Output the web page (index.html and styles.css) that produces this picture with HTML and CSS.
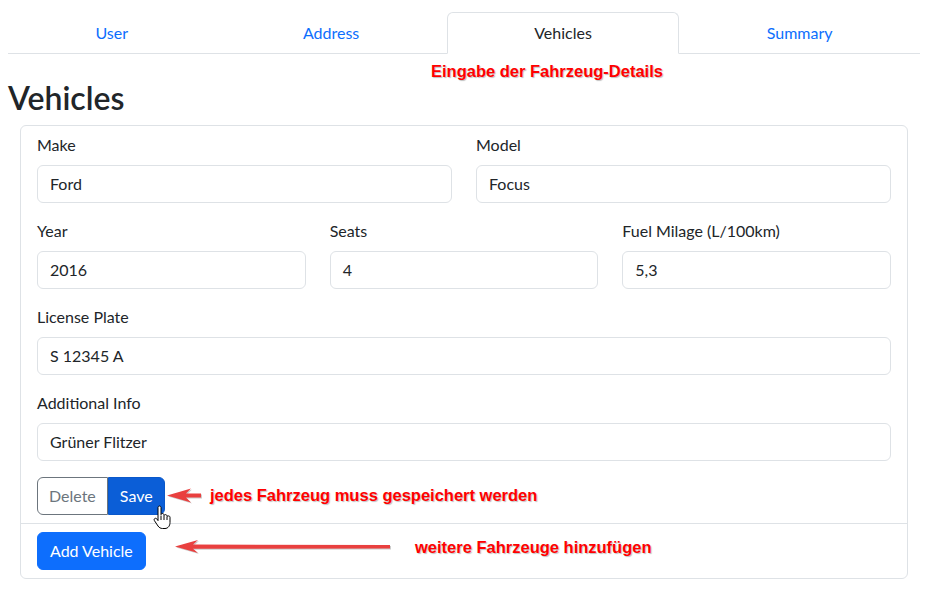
FILE: index.html
```html
<!DOCTYPE html>
<html lang="de">
<head>
<meta charset="utf-8">
<title>Vehicles</title>
<link rel="stylesheet" href="styles.css">
</head>
<body>
<div class="container">
  <nav class="tabs">
    <a class="tab" href="#">User</a>
    <a class="tab" href="#">Address</a>
    <a class="tab active" href="#">Vehicles</a>
    <a class="tab" href="#">Summary</a>
  </nav>
  <h2 class="title">Vehicles</h2>
  <div class="card">
    <div class="card-body">
      <div class="row row-2">
        <div class="field"><label>Make</label><div class="input">Ford</div></div>
        <div class="field"><label>Model</label><div class="input">Focus</div></div>
      </div>
      <div class="row row-3">
        <div class="field"><label>Year</label><div class="input">2016</div></div>
        <div class="field"><label>Seats</label><div class="input">4</div></div>
        <div class="field"><label>Fuel Milage (L/100km)</label><div class="input">5,3</div></div>
      </div>
      <div class="field"><label>License Plate</label><div class="input">S 12345 A</div></div>
      <div class="field"><label>Additional Info</label><div class="input">Grüner Flitzer</div></div>
      <div class="btn-group">
        <button class="btn btn-outline">Delete</button>
        <button class="btn btn-save">Save</button>
      </div>
    </div>
    <div class="card-footer">
      <button class="btn btn-primary">Add Vehicle</button>
    </div>
  </div>
</div>

<div class="note note-top">Eingabe der Fahrzeug-Details</div>
<div class="note note-save">jedes Fahrzeug muss gespeichert werden</div>
<div class="note note-add">weitere Fahrzeuge hinzufügen</div>

<svg class="arrow arrow-save" width="38" height="17" viewBox="0 0 38 17">
  <polygon points="1,8.5 25,1.5 20,6.5 35,6.5 35,10.5 20,10.5 25,15.5" fill="#e9403f"/>
</svg>
<svg class="arrow arrow-add" width="222" height="18" viewBox="0 0 222 18">
  <polygon points="2,8.5 25,2 20,6.5 217,7 217,10.5 20,10.8 25,15" fill="#e9403f"/>
</svg>

<svg class="cursor" width="22" height="26" viewBox="0 0 22 26">
  <path d="M7.5 1C8.3 1 9 1.7 9 2.5V9.6C9.3 8.9 9.9 8.5 10.5 8.5C11.3 8.5 12 9.1 12 9.9V10.6C12.3 10 12.9 9.6 13.5 9.6C14.3 9.6 15 10.2 15 11V11.7C15.3 11.2 15.9 10.9 16.5 10.9C17.3 10.9 18 11.5 18 12.3V17.5C18 20.8 16 23.5 13 23.5H10.5C8.6 23.5 7 22.5 6 21L2.4 15.6C1.9 14.8 2.1 13.9 2.8 13.5C3.5 13.1 4.4 13.3 4.9 14L6 15.6V2.5C6 1.7 6.7 1 7.5 1Z" fill="#fff" stroke="#000" stroke-width="1" stroke-linejoin="round"/>
  <path d="M9 10.5V15M12 11V15M15 12V15" stroke="#000" stroke-width="1" fill="none"/>
</svg>
</body>
</html>
```

FILE: styles.css
```css
* { box-sizing: border-box; }

body {
  margin: 0;
  background: #fff;
  color: #212529;
  font-family: Lato, "Noto Sans", sans-serif;
  font-size: 16px;
  line-height: 24px;
  position: relative;
}

.container {
  width: 928px;
  padding: 12px 8px 0 8px;
}

.tabs {
  display: flex;
  border-bottom: 1px solid #dee2e6;
}

.tab {
  flex: 1 1 auto;
  text-align: center;
  padding: 8px 16px;
  color: #0d6efd;
  text-decoration: none;
  border: 1px solid transparent;
  border-top-left-radius: 6px;
  border-top-right-radius: 6px;
  margin-bottom: -1px;
}

.tab.active {
  color: #212529;
  border-color: #dee2e6 #dee2e6 #fff;
  background: #fff;
}

.title {
  margin: 25px 0 8px;
  font-size: 32px;
  line-height: 38px;
  font-weight: 600;
}

.card {
  margin: 0 12px;
  border: 1px solid #dee2e6;
  border-radius: 6px;
}

.card-body {
  padding: 7px 16px 8px;
}

.row {
  display: grid;
  gap: 24px;
}

.row-2 { grid-template-columns: 1fr 1fr; }
.row-3 { grid-template-columns: 1fr 1fr 1fr; }

.field {
  margin-bottom: 16px;
}

.field label {
  display: block;
  margin-bottom: 8px;
}

.input {
  height: 38px;
  padding: 6px 12px;
  border: 1px solid #dee2e6;
  border-radius: 6px;
  color: #212529;
}

.btn-group {
  display: flex;
}

.btn {
  font-family: inherit;
  font-size: 16px;
  line-height: 24px;
  height: 38px;
  padding: 6px 12px;
  border: 1px solid transparent;
  border-radius: 6px;
  cursor: pointer;
}

.btn-group .btn {
  padding: 6px 11px;
}

.btn-outline {
  background: #fff;
  color: #6c757d;
  border-color: #6c757d;
  border-top-right-radius: 0;
  border-bottom-right-radius: 0;
}

.btn-save {
  background: #0b5ed7;
  border-color: #0a58ca;
  color: #fff;
  border-top-left-radius: 0;
  border-bottom-left-radius: 0;
}

.card-footer {
  border-top: 1px solid #dee2e6;
  padding: 8px 16px;
}

.btn-primary {
  background: #0d6efd;
  color: #fff;
  border-color: #0d6efd;
}

.note {
  position: absolute;
  font-family: "Liberation Sans", Arial, sans-serif;
  font-weight: 700;
  font-size: 16.5px;
  line-height: 20px;
  color: #ff0000;
  text-shadow: 1px 1px 1px rgba(0, 0, 0, 0.25);
  white-space: nowrap;
}

.note-top { left: 431px; top: 61px; }
.note-save { left: 210px; top: 485px; }
.note-add { left: 415px; top: 537px; }

.arrow {
  position: absolute;
  filter: drop-shadow(1px 1px 0.5px rgba(0, 0, 0, 0.2));
}

.arrow-save { left: 166px; top: 487px; }
.arrow-add { left: 173px; top: 538px; }

.cursor {
  position: absolute;
  left: 152px;
  top: 505px;
}
```
